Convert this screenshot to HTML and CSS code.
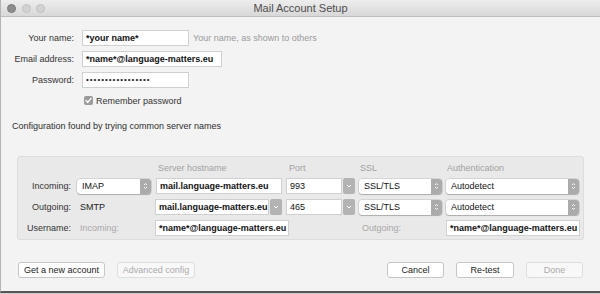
FILE: index.html
```html
<!DOCTYPE html>
<html>
<head>
<meta charset="utf-8">
<link rel="stylesheet" href="styles.css">
</head>
<body>
<div class="window">
  <div class="titlebar">
    <div class="lights"><span class="light dark"></span><span class="light"></span><span class="light"></span></div>
    <div class="title">Mail Account Setup</div>
    <div></div>
  </div>
  <div class="content">
    <div class="form">
      <div class="lbl">Your name:</div>
      <div class="field"><div class="tf w107">*your name*</div><span class="hint">Your name, as shown to others</span></div>
      <div class="lbl">Email address:</div>
      <div class="field"><div class="tf w140">*name*@language-matters.eu</div></div>
      <div class="lbl">Password:</div>
      <div class="field"><div class="tf w107 pw">•••••••••••••••••</div></div>
    </div>
    <div class="remember">
      <span class="check"><svg width="9" height="9" viewBox="0 0 9 9"><path d="M2 4.6 L3.8 6.4 L7 2.4" fill="none" stroke="#fff" stroke-width="1.4" stroke-linecap="round" stroke-linejoin="round"/></svg></span>
      <span>Remember password</span>
    </div>
    <div class="found">Configuration found by trying common server names</div>

    <div class="panel">
      <div></div><div></div>
      <div class="hd p3">Server hostname</div>
      <div class="hd p3">Port</div>
      <div class="hd p1">SSL</div>
      <div class="hd p1">Authentication</div>

      <div class="plbl">Incoming:</div>
      <div class="popup"><span>IMAP</span><span class="arr"><svg width="5" height="8" viewBox="0 0 5 8"><path d="M1 3 L2.5 1.5 L4 3 M1 5 L2.5 6.5 L4 5" fill="none" stroke="#fff" stroke-width="0.9"/></svg></span></div>
      <div class="tf host">mail.language-matters.eu</div>
      <div class="combo"><div class="tf">993</div><span class="carr"><svg width="6" height="4" viewBox="0 0 6 4"><path d="M1 1 L3 3 L5 1" fill="none" stroke="#fff" stroke-width="1"/></svg></span></div>
      <div class="popup"><span>SSL/TLS</span><span class="arr"><svg width="5" height="8" viewBox="0 0 5 8"><path d="M1 3 L2.5 1.5 L4 3 M1 5 L2.5 6.5 L4 5" fill="none" stroke="#fff" stroke-width="0.9"/></svg></span></div>
      <div class="popup"><span>Autodetect</span><span class="arr"><svg width="5" height="8" viewBox="0 0 5 8"><path d="M1 3 L2.5 1.5 L4 3 M1 5 L2.5 6.5 L4 5" fill="none" stroke="#fff" stroke-width="0.9"/></svg></span></div>

      <div class="plbl">Outgoing:</div>
      <div class="ptext">SMTP</div>
      <div class="combo"><div class="tf hostc">mail.language-matters.eu</div><span class="carr"><svg width="6" height="4" viewBox="0 0 6 4"><path d="M1 1 L3 3 L5 1" fill="none" stroke="#fff" stroke-width="1"/></svg></span></div>
      <div class="combo"><div class="tf">465</div><span class="carr"><svg width="6" height="4" viewBox="0 0 6 4"><path d="M1 1 L3 3 L5 1" fill="none" stroke="#fff" stroke-width="1"/></svg></span></div>
      <div class="popup"><span>SSL/TLS</span><span class="arr"><svg width="5" height="8" viewBox="0 0 5 8"><path d="M1 3 L2.5 1.5 L4 3 M1 5 L2.5 6.5 L4 5" fill="none" stroke="#fff" stroke-width="0.9"/></svg></span></div>
      <div class="popup"><span>Autodetect</span><span class="arr"><svg width="5" height="8" viewBox="0 0 5 8"><path d="M1 3 L2.5 1.5 L4 3 M1 5 L2.5 6.5 L4 5" fill="none" stroke="#fff" stroke-width="0.9"/></svg></span></div>

      <div class="plbl">Username:</div>
      <div class="ptext gray">Incoming:</div>
      <div class="tf user span2">*name*@language-matters.eu</div>
      <div class="ptext gray p2">Outgoing:</div>
      <div class="tf user">*name*@language-matters.eu</div>
    </div>

    <div class="buttons">
      <div class="btn b87">Get a new account</div>
      <div class="btn b78 disabled">Advanced config</div>
      <div class="spacer"></div>
      <div class="btn b57">Cancel</div>
      <div class="btn b58">Re-test</div>
      <div class="btn b57 disabled">Done</div>
    </div>
  </div>
</div>
</body>
</html>
```

FILE: styles.css
```css
* { box-sizing: border-box; }
html, body { margin: 0; padding: 0; }
body {
  width: 600px;
  height: 294px;
  overflow: hidden;
  background: #cfcfcf;
  font-family: "Liberation Sans", Arial, sans-serif;
  font-size: 9px;
  color: #2e2e2e;
}
.window {
  height: 293px;
  background: #f3f3f3;
  border-left: 1px solid #b4b4b4;
  border-bottom: 2px solid #555;
  display: flex;
  flex-direction: column;
}
.titlebar {
  height: 17px;
  background: linear-gradient(#ededed, #d8d8d8);
  border-bottom: 1px solid #bdbdbd;
  display: grid;
  grid-template-columns: 1fr auto 1fr;
  align-items: center;
}
.lights {
  display: flex;
  gap: 5.5px;
  padding-left: 6px;
}
.light {
  width: 9px;
  height: 9px;
  border-radius: 50%;
  background: #d2d2d2;
  border: 0.5px solid #c0c0c0;
}
.light.dark { background: #8d8d8d; border-color: #7a7a7a; }
.title {
  font-size: 11px;
  color: #4d4d4d;
}
.content {
  flex: 1;
  padding: 13px 16px 0 11px;
  display: flex;
  flex-direction: column;
}
.form {
  display: grid;
  grid-template-columns: 62px auto;
  column-gap: 8px;
  row-gap: 5px;
  align-items: center;
}
.lbl { text-align: right; color: #333; }
.field { display: flex; align-items: center; gap: 4px; }
.tf {
  height: 16px;
  background: #fff;
  border: 1px solid #d0d0d0;
  padding: 0 3px;
  font-weight: bold;
  font-size: 9px;
  line-height: 14px;
  color: #111;
  white-space: nowrap;
  overflow: hidden;
}
.w107 { width: 107px; }
.w140 { width: 140px; }
.pw { font-size: 8px; letter-spacing: 1px; font-weight: normal; color: #222; }
.hint { color: #9a9a9a; }
.remember {
  margin: 8px 0 0 72px;
  height: 9px;
  display: flex;
  align-items: center;
  gap: 3px;
  color: #333;
}
.check {
  width: 9px;
  height: 9px;
  border-radius: 2px;
  background: #9b9b9b;
  display: flex;
}
.found {
  margin-top: 15px;
  line-height: 12px;
  color: #2e2e2e;
}
.panel {
  margin: 24px 0 0 5px;
  background: #e9e9e9;
  border: 1px solid #dddddd;
  border-radius: 3px;
  padding: 6px 5px 3px 0;
  display: grid;
  grid-template-columns: 55px 74px 127px 69px 83px 133px;
  column-gap: 4px;
  row-gap: 5px;
  grid-auto-rows: 16px;
  grid-template-rows: 10px;
  align-items: center;
}
.hd { color: #a2a2a2; line-height: 10px; }
.p3 { padding-left: 3px; }
.p1 { padding-left: 1px; }
.p2 { padding-left: 2px; }
.plbl { text-align: right; padding-right: 2px; color: #333; }
.ptext { padding-left: 3px; color: #222; }
.gray { color: #a8a8a8; }
.popup {
  height: 15px;
  background: #fff;
  border-radius: 3px;
  box-shadow: 0 0 0 0.5px rgba(0,0,0,0.18), 0 1px 1px rgba(0,0,0,0.18);
  display: flex;
  align-items: center;
  justify-content: space-between;
  padding-left: 5px;
  color: #111;
}
.arr {
  width: 11px;
  height: 15px;
  background: #ababab;
  border-radius: 0 3px 3px 0;
  display: flex;
  align-items: center;
  justify-content: center;
}
.host { margin-left: 1px; width: 126px; }
.combo { display: flex; gap: 1px; align-items: center; }
.combo .tf { flex: 1; font-weight: normal; color: #111; }
.combo .tf.hostc { font-weight: bold; }
.carr {
  width: 12px;
  height: 16px;
  background: #b3b3b3;
  border-radius: 2px;
  display: flex;
  align-items: center;
  justify-content: center;
}
.user { width: 134px; justify-self: start; }
.span2 { grid-column: 3 / span 2; }
.buttons {
  margin: 22px 1px 0 6px;
  display: flex;
  gap: 12px;
}
.spacer { flex: 1; }
.btn {
  height: 16px;
  background: #fff;
  border: 1px solid #c6c6c6;
  border-radius: 3px;
  text-align: center;
  line-height: 14px;
  color: #222;
}
.btn.disabled { background: #f8f8f8; border-color: #dedede; color: #ababab; }
.b87 { width: 87px; }
.b78 { width: 78px; }
.b57 { width: 57px; }
.b58 { width: 58px; }
```
